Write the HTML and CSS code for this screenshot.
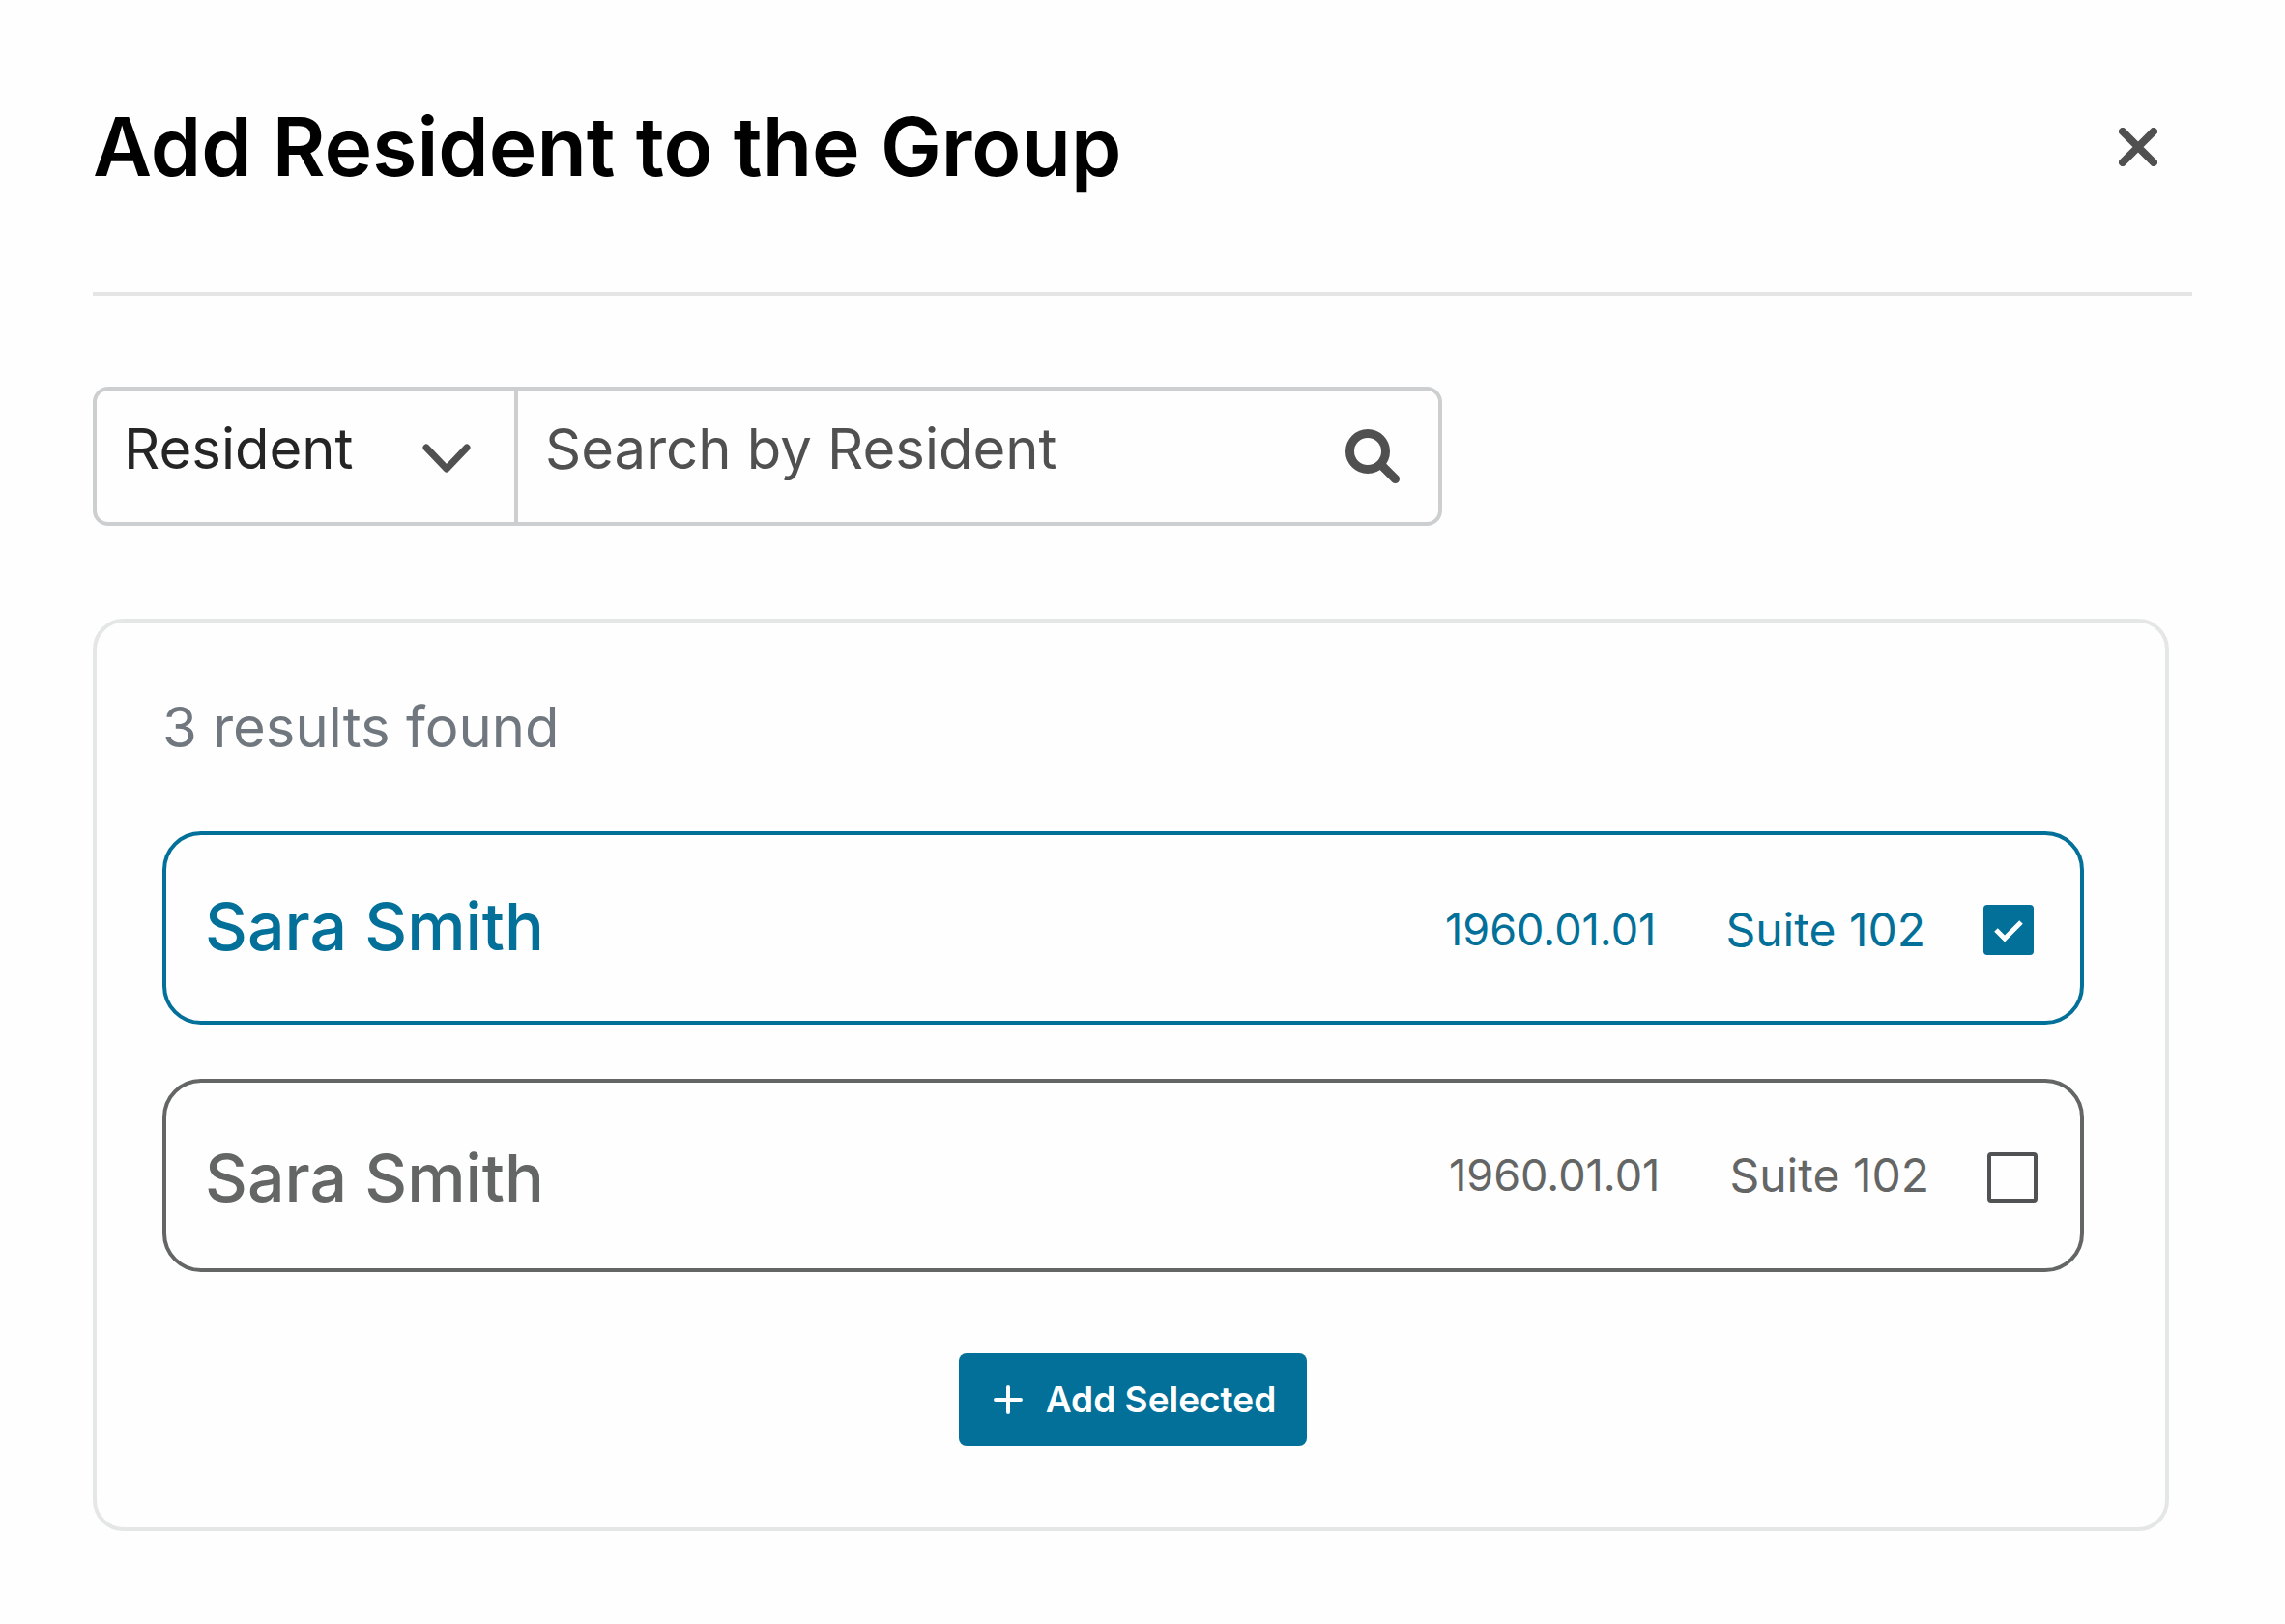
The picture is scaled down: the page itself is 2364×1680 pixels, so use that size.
FILE: index.html
```html
<!DOCTYPE html>
<html lang="en">
<head>
    <meta charset="UTF-8">
    <meta name="viewport" content="width=device-width, initial-scale=1.0">
    <title>Add Resident to the Group</title>
    <link rel="stylesheet" href="styles.css">
</head>
<body>

<main class="modal">
    <header class="modal-header">
        <h1>Add Resident to the Group</h1>
        <button type="button" class="close-btn" aria-label="Close">
            <svg width="40" height="40" viewBox="0 0 40 40" fill="none" stroke="currentColor" stroke-width="8" stroke-linecap="round">
                <path d="M4 4L36 36M36 4L4 36" />
            </svg>
        </button>
    </header>

    <!-- search bar -->
    <form class="search-bar" role="search">
        <div class="search-type">
            <select aria-label="Search type">
                <option selected>Resident</option>
                <option>Suite</option>
            </select>
            <svg class="chevron" width="50" height="30" viewBox="0 0 50 30" fill="none" stroke="currentColor" stroke-width="7" stroke-linecap="round" stroke-linejoin="round">
                <path d="M4 4L25 26L46 4" />
            </svg>
        </div>
        <input type="text" class="search-input" placeholder="Search by Resident" aria-label="Search by Resident">
        <button type="submit" class="search-btn" aria-label="Search">
            <svg width="56" height="56" viewBox="0 0 56 56" fill="none" stroke="currentColor" stroke-width="9" stroke-linecap="round">
                <circle cx="23" cy="23" r="18.5" />
                <path d="M37 37L51.500 51.500" />
            </svg>
        </button>
    </form>

    <!-- results -->
    <section class="results">
        <p class="results-count">3 results found</p>

        <label class="result selected">
            <span class="name">Sara Smith</span>
            <span class="birthday">1960.01.01</span>
            <span class="suite">Suite 102</span>
            <input type="checkbox" checked>
        </label>

        <label class="result">
            <span class="name">Sara Smith</span>
            <span class="birthday">1960.01.01</span>
            <span class="suite">Suite 102</span>
            <input type="checkbox">
        </label>

        <button type="button" class="add-btn">
            <svg width="30" height="30" viewBox="0 0 30 30" fill="none" stroke="currentColor" stroke-width="4" stroke-linecap="round">
                <path d="M15 2V28M2 15H28" />
            </svg>
            Add Selected
        </button>
    </section>
</main>

</body>
</html>
```
FILE: styles.css
```css
* {
    box-sizing: border-box;
}

body {
    font-family: Inter, "Open Sans", sans-serif;
    font-size: 58px;
    line-height: 80px;
    color: #505050;
    background-color: #fefefe;
    margin: 0;
}

button,
input,
select {
    font: inherit;
    color: inherit;
    margin: 0;
    padding: 0;
    border: none;
    background: none;
}

button,
select {
    cursor: pointer;
}

svg {
    display: block;
}

.modal {
    padding: 96px;
}

.modal-header {
    display: flex;
    align-items: center;
    justify-content: space-between;
    height: 210px;
    padding: 0 36px 94px 0;
    border-bottom: 4px solid #e5e5e5;
}

.modal-header h1 {
    margin: 0;
    font-size: 84px;
    font-weight: 600;
    line-height: 112px;
    color: #000;
}

/* search bar */
.search-bar {
    display: flex;
    max-width: 1396px;
    height: 144px;
    margin-top: 94px;
    border: 4px solid #cccecf;
    border-radius: 16px;
}

.search-type {
    display: grid;
    align-items: center;
    width: 436px;
    border-right: 4px solid #cccecf;
}

.search-type select {
    grid-area: 1 / 1;
    appearance: none;
    height: 100%;
    padding: 0 96px 16px 28px;
    color: #252525;
}

.chevron {
    grid-area: 1 / 1;
    justify-self: end;
    margin: 4px 45px 0 0;
    pointer-events: none;
}

.search-input {
    flex: 1;
    min-width: 0;
    padding: 0 28px 16px;
}

.search-input::placeholder {
    color: #505050;
    opacity: 1;
}

.search-btn {
    padding: 0 40px;
}

/* results */
.results {
    display: flex;
    flex-direction: column;
    margin: 96px 24px 0 0;
    padding: 68px 84px 84px 68px;
    border: 4px solid #e5e6e6;
    border-radius: 32px;
}

.results-count {
    margin: 0 0 68px;
    color: #70777f;
}

.result {
    display: flex;
    align-items: center;
    height: 200px;
    margin-bottom: 56px;
    padding: 4px 44px 0 40px;
    border: 4px solid #646565;
    border-radius: 40px;
    font-size: 48px;
    color: #646565;
    cursor: pointer;
}

.name {
    flex: 1;
    font-size: 68px;
    font-weight: 500;
}

.birthday {
    padding-bottom: 4px;
    font-size: 45px;
}

.suite {
    margin: 0 60px 0 72px;
    padding-bottom: 4px;
}

.result.selected {
    padding-right: 48px;
    border-color: #027099;
    color: #027099;
}

.selected .name {
    padding-bottom: 8px;
}

.selected .birthday,
.selected .suite {
    padding-bottom: 0;
}

.result input {
    appearance: none;
    width: 52px;
    height: 52px;
    border: 4px solid #505253;
    border-radius: 4px;
    cursor: pointer;
}

.result input:checked {
    border: none;
    background: #027099 url("data:image/svg+xml,%3Csvg xmlns='http://www.w3.org/2000/svg' viewBox='0 0 52 52' fill='none' stroke='white' stroke-width='5'%3E%3Cpath d='M13 26L22 35L39 18'/%3E%3C/svg%3E");
}

.add-btn {
    display: flex;
    align-items: center;
    align-self: center;
    gap: 24px;
    height: 96px;
    margin: 28px 0 0 20px;
    padding: 0 32px 0 36px;
    border-radius: 8px;
    background-color: #027099;
    color: #fff;
    font-size: 37px;
    font-weight: 600;
}
```
